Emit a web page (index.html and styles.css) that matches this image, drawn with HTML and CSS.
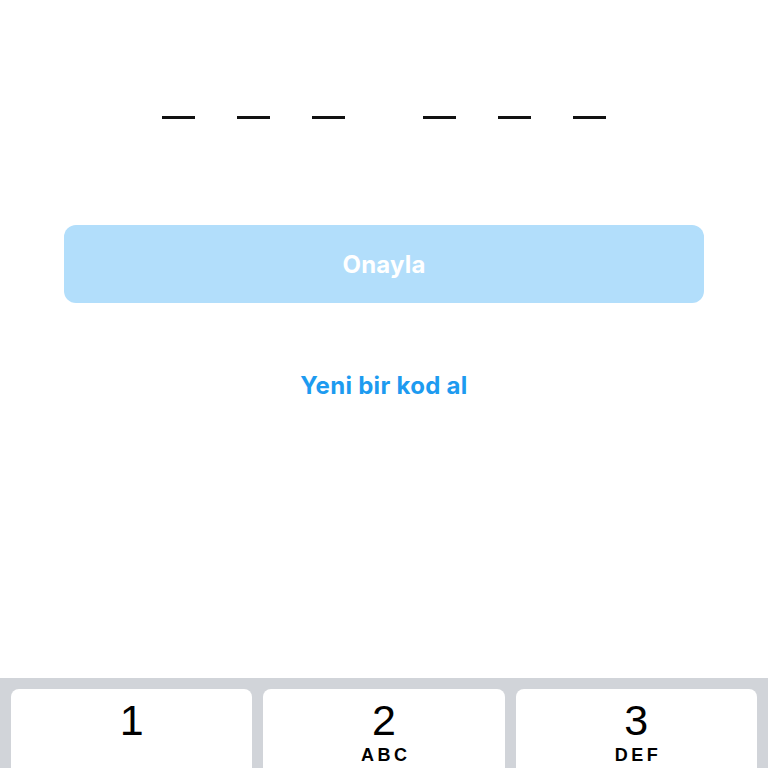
FILE: index.html
```html
<!DOCTYPE html>
<html lang="tr">
<head>
<meta charset="utf-8">
<link rel="stylesheet" href="styles.css">
</head>
<body>
<div class="screen">
  <div class="code">
    <div class="group">
      <span class="dash"></span><span class="dash"></span><span class="dash"></span>
    </div>
    <div class="group">
      <span class="dash"></span><span class="dash"></span><span class="dash"></span>
    </div>
  </div>
  <button class="confirm">Onayla</button>
  <a class="resend">Yeni bir kod al</a>
  <div class="spacer"></div>
  <div class="keyboard">
    <div class="key"><span class="digit">1</span><span class="letters">&nbsp;</span></div>
    <div class="key"><span class="digit">2</span><span class="letters">ABC</span></div>
    <div class="key"><span class="digit">3</span><span class="letters">DEF</span></div>
  </div>
</div>
</body>
</html>
```
FILE: styles.css
```css
html, body {
  margin: 0;
  padding: 0;
  background: #ffffff;
}
body {
  font-family: Inter, "Noto Sans", sans-serif;
  width: 768px;
  height: 768px;
  overflow: hidden;
}
.screen {
  display: flex;
  flex-direction: column;
  height: 768px;
}
.code {
  display: flex;
  justify-content: center;
  gap: 78px;
  padding-top: 116px;
}
.group {
  display: flex;
  gap: 42px;
}
.dash {
  display: block;
  width: 33px;
  height: 3px;
  background: #111111;
}
.confirm {
  margin: 106px 64px 0;
  height: 78px;
  border: none;
  border-radius: 12px;
  background: #b2defb;
  color: #ffffff;
  font-family: Inter, "Noto Sans", sans-serif;
  font-weight: 700;
  font-size: 24px;
  letter-spacing: 0.2px;
  padding: 0;
}
.resend {
  display: block;
  margin-top: 69px;
  text-align: center;
  color: #1d9bf0;
  font-weight: 700;
  font-size: 24px;
  letter-spacing: 0.3px;
  line-height: 28px;
}
.spacer {
  flex: 1;
}
.keyboard {
  background: #d1d4d9;
  height: 90px;
  padding: 11px 11px 0;
  display: grid;
  grid-template-columns: repeat(3, 1fr);
  gap: 11px;
  box-sizing: border-box;
}
.key {
  background: #ffffff;
  border-radius: 8px 8px 0 0;
  display: flex;
  flex-direction: column;
  align-items: center;
}
.digit {
  font-family: "Liberation Sans", Arial, sans-serif;
  font-size: 43px;
  line-height: 44px;
  color: #000000;
  margin-top: 9px;
}
.letters {
  font-family: "Liberation Sans", Arial, sans-serif;
  font-weight: 700;
  font-size: 18px;
  letter-spacing: 3.5px;
  line-height: 20px;
  color: #000000;
  padding-left: 3.5px;
  margin-top: 3px;
}
```
